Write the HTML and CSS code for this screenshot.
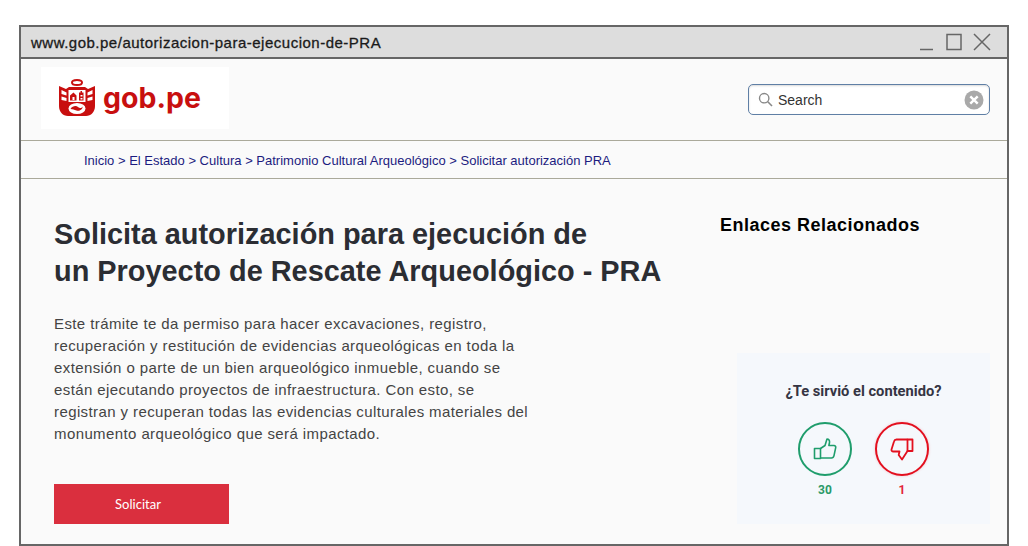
FILE: index.html
```html
<!DOCTYPE html>
<html lang="es">
<head>
  <meta charset="UTF-8">
  <meta name="viewport" content="width=device-width, initial-scale=1.0">
  <title>Solicita autorización PRA</title>
  <link rel="stylesheet" href="styles.css">
</head>
<body>
  <div class="window">
    <div class="titlebar">
      <span class="url">www.gob.pe/autorizacion-para-ejecucion-de-PRA</span>
      <div class="window-buttons">
        <svg width="16" height="18" viewBox="0 0 16 18"><path d="M1 16.500h13" stroke="#666" stroke-width="1.500" fill="none"/></svg>
        <svg width="16" height="18" viewBox="0 0 16 18"><rect x="1" y="1.500" width="14" height="15" stroke="#666" stroke-width="1.500" fill="none"/></svg>
        <svg width="18" height="18" viewBox="0 0 18 18"><path d="M1 1l16 16M17 1L1 17" stroke="#666" stroke-width="1.500" fill="none"/></svg>
      </div>
    </div>

    <header class="header">
      <div class="logo">
        <svg class="crest" width="38" height="38" viewBox="0 0 38 38">
          <!-- wreath on top -->
          <ellipse cx="19" cy="3.500" rx="5" ry="2.500" fill="none" stroke="#c80f0f" stroke-width="2"/>
          <!-- shield and wings -->
          <path d="M1 7l7 3 3-2h16l3 2 7-3v20c0 6-4 10-9 10H10c-5 0-9-4-9-10z" fill="#c80f0f"/>
          <path d="M3.500 11l5 2.500v3l-5-1.500zM3.500 17.500l5 1.500v3l-5-1zM34.500 11l-5 2.500v3l5-1.500zM34.500 17.500l-5 1.500v3l5-1z" fill="#fff"/>
          <!-- upper field -->
          <path d="M10.500 11h17v12h-17z" fill="#fff"/>
          <path d="M12 21.500v-5l3.500-3 3 3v5zM21 21.500v-8h1.500v-1.500h1.500v1.500h1.500v8z" fill="#c80f0f"/>
          <path d="M14.500 21v-3h2v3zM22.500 16h2v1.500h-2zM22.500 19h2v1.500h-2z" fill="#fff"/>
          <!-- lower field -->
          <ellipse cx="19" cy="29.500" rx="8.500" ry="5.500" fill="#fff"/>
          <path d="M12.500 30c2-3.500 6-3.500 7.500-2s3.500 1.500 4.500-.5c.5 3-3.500 5-6 4s-3.500-1-6-1.500z" fill="#c80f0f"/>
        </svg>
        <span class="logo-text">gob.pe</span>
      </div>
      <div class="search">
        <svg width="15" height="15" viewBox="0 0 15 15"><circle cx="6.200" cy="6.200" r="4.700" fill="none" stroke="#888" stroke-width="1.400"/><path d="M9.800 9.800l4.200 4.200" stroke="#888" stroke-width="1.600" fill="none"/></svg>
        <span class="search-text">Search</span>
        <svg class="search-clear" width="20" height="20" viewBox="0 0 20 20"><circle cx="10" cy="10" r="9.500" fill="#a9a9a9"/><path d="M6.300 6.300l7.400 7.400M13.700 6.300l-7.400 7.400" stroke="#fff" stroke-width="2.400" fill="none"/></svg>
      </div>
    </header>

    <nav class="breadcrumb">Inicio &gt; El Estado &gt; Cultura &gt; Patrimonio Cultural Arqueológico &gt; Solicitar autorización PRA</nav>

    <main class="content">
      <section class="info">
        <h1>Solicita autorización para ejecución de<br>un Proyecto de Rescate Arqueológico - PRA</h1>
        <p>Este trámite te da permiso para hacer excavaciones, registro,<br>recuperación y restitución de evidencias arqueológicas en toda la<br>extensión o parte de un bien arqueológico inmueble, cuando se<br>están ejecutando proyectos de infraestructura. Con esto, se<br>registran y recuperan todas las evidencias culturales materiales del<br>monumento arqueológico que será impactado.</p>
        <a class="button" href="#">Solicitar</a>
      </section>

      <aside class="side">
        <h2>Enlaces Relacionados</h2>
        <div class="feedback">
          <h3>¿Te sirvió el contenido?</h3>
          <div class="votes">
            <div class="vote up">
              <div class="vote-circle">
                <svg width="24" height="24" viewBox="0 0 24 24" fill="none" stroke="#1f9d6c" stroke-width="1.600" stroke-linejoin="round"><path d="M1.500 11.500h6v10h-6z"/><path d="M7.500 11.500l4.500-3 2-6.500c1.800 0 2.800 1.500 2.500 3.500l-.6 3h5.100c1.300 0 2 1 1.700 2.200l-1.700 8c-.3 1.300-1.200 2.300-2.500 2.300H7.500"/></svg>
              </div>
              <span>30</span>
            </div>
            <div class="vote down">
              <div class="vote-circle">
                <svg width="24" height="24" viewBox="0 0 24 24" fill="none" stroke="#e3101f" stroke-width="1.800" stroke-linejoin="round"><path d="M17.500 2.500h5v11.500h-5z"/><path d="M17.500 2.500H6.500c-1.300 0-2.200.8-2.500 2L1.500 12.500c-.3 1.200.5 2 1.700 2h6.300l-.8 3.500 3.300 4.500 5.500-8.500"/></svg>
              </div>
              <span>1</span>
            </div>
          </div>
        </div>
      </aside>
    </main>
  </div>
</body>
</html>
```

FILE: styles.css
```css
* {
  box-sizing: border-box;
}

body {
  margin: 0;
  background-color: #fff;
  font-family: 'Liberation Sans', sans-serif;
  overflow: hidden;
}

.window {
  width: 990px;
  height: 521px;
  margin: 25px 0 0 19px;
  border: 2px solid #666;
  background-color: #fafafa;
  display: flex;
  flex-direction: column;
}

.titlebar {
  height: 32px;
  flex: none;
  background-color: #dddddd;
  border-bottom: 2px solid #666;
  display: flex;
  align-items: center;
  justify-content: space-between;
  padding: 0 16px 0 10px;
}

.url {
  font-size: 15px;
  letter-spacing: 0.500px;
  -webkit-text-stroke: 0.300px #1a1a1a;
  color: #1a1a1a;
}

.window-buttons {
  display: flex;
  align-items: center;
  gap: 11px;
}

.header {
  height: 82px;
  flex: none;
  display: flex;
  align-items: flex-start;
  justify-content: space-between;
  padding: 8px 17px 0 20px;
  border-bottom: 1px solid #aaa99a;
}

.logo {
  width: 188px;
  height: 62px;
  background-color: #fff;
  display: flex;
  align-items: center;
  padding-left: 17px;
  gap: 7px;
}

.logo-text {
  font-family: 'Inter', sans-serif;
  font-weight: 700;
  font-size: 28.500px;
  line-height: 1;
  color: #c80f0f;
}

.search {
  width: 242px;
  height: 31px;
  margin-top: 17px;
  background-color: #fff;
  border: 1px solid #5f7fa5;
  border-radius: 5px;
  box-shadow: inset 0 1px 2px rgba(0, 0, 0, 0.15);
  display: flex;
  align-items: center;
  padding: 0 5px 0 9px;
  gap: 5px;
}

.search-text {
  flex: 1;
  font-size: 14px;
  color: #333;
}

.breadcrumb {
  height: 38px;
  flex: none;
  padding: 13px 0 0 63px;
  border-bottom: 1px solid #aaa99a;
  font-size: 13px;
  line-height: 14px;
  color: #1c1c80;
}

.content {
  flex: 1;
  display: flex;
  justify-content: space-between;
  padding: 0 17px 21px 33px;
}

.info {
  padding-top: 37px;
}

h1 {
  margin: 0;
  font-size: 28.900px;
  line-height: 37px;
  font-weight: 700;
  color: #2b2d33;
}

p {
  margin: 23px 0 0;
  font-size: 15px;
  line-height: 22px;
  letter-spacing: 0.400px;
  color: #444;
}

.button {
  display: flex;
  align-items: center;
  justify-content: center;
  width: 175px;
  height: 40px;
  margin-top: 39px;
  background-color: #da2f3e;
  color: #fff;
  font-family: 'Lato', sans-serif;
  font-size: 13px;
  padding-right: 7px;
  text-decoration: none;
}

.side {
  width: 253px;
  display: flex;
  flex-direction: column;
  justify-content: space-between;
  padding-top: 35px;
}

h2 {
  margin: 0 0 0 -17px;
  font-size: 18px;
  line-height: 22px;
  letter-spacing: 0.500px;
  font-weight: 700;
  color: #000;
}

.feedback {
  height: 171px;
  background-color: #f5f8fc;
  padding-top: 29px;
  text-align: center;
}

h3 {
  margin: 0;
  font-family: 'Roboto', sans-serif;
  font-size: 14.700px;
  line-height: 18px;
  font-weight: 700;
  color: #353543;
}

.votes {
  display: flex;
  justify-content: center;
  gap: 23px;
  margin-top: 22px;
}

.vote {
  width: 54px;
  display: flex;
  flex-direction: column;
  align-items: center;
  gap: 6px;
  font-family: 'Roboto', sans-serif;
  font-size: 12px;
  line-height: 16px;
  font-weight: 700;
}

.vote-circle {
  width: 54px;
  height: 54px;
  border-radius: 50%;
  display: flex;
  align-items: center;
  justify-content: center;
  background-color: #f5f8fc;
}

.up {
  color: #2b9a68;
}

.up .vote-circle {
  border: 2px solid #1f9d6c;
}

.down {
  color: #e3243a;
}

.down .vote-circle {
  border: 2px solid #e3101f;
  box-shadow: 0 0 3px rgba(227, 16, 31, 0.2);
}
```
